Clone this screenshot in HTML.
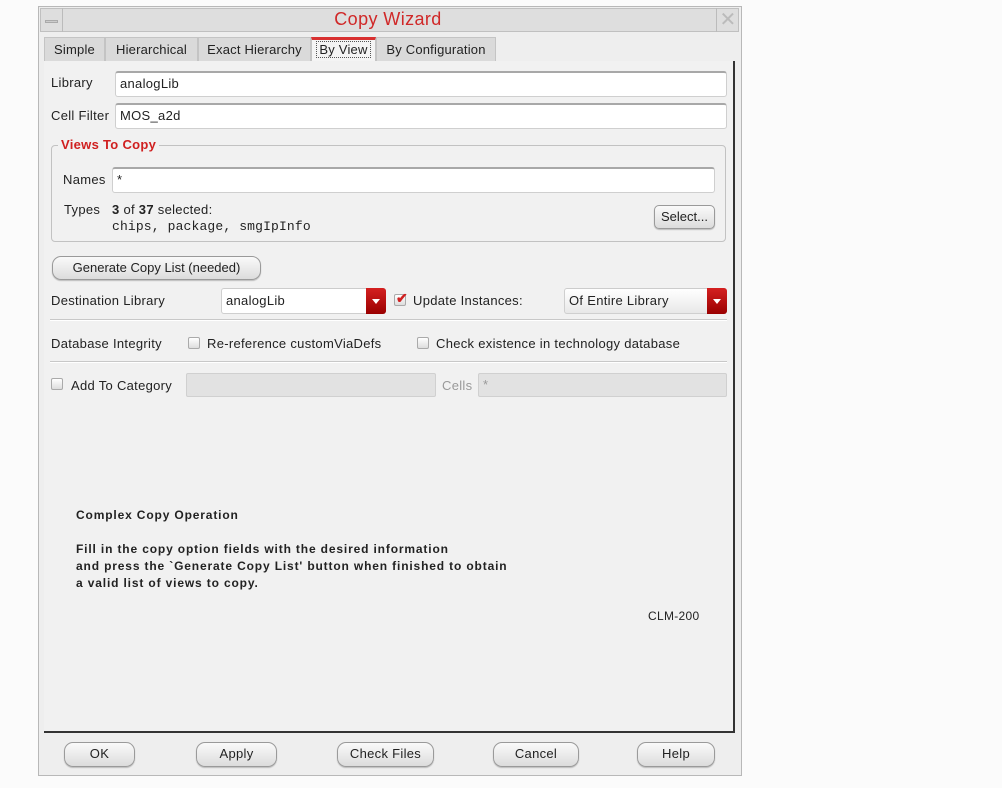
<!DOCTYPE html>
<html><head><meta charset="utf-8"><style>
*{box-sizing:border-box;margin:0;padding:0}
body{width:1002px;height:788px;background:#fbfbfb;font-family:"Liberation Sans",sans-serif;font-size:13px;color:#222;position:relative;overflow:hidden;letter-spacing:0.3px}
.a{position:absolute}
.win{left:38px;top:6px;width:704px;height:770px;background:#eeeeee;border:1px solid #b8b8b8}
.inp{background:#fff;border:1px solid #cfcfcf;border-top:2px solid #a8a8a8;border-radius:3px;padding-left:4px;line-height:22px}
.btn{background:linear-gradient(#fafafa,#dcdcdc);border:1px solid #9a9a9a;border-radius:9px;text-align:center;line-height:22px;box-shadow:0 1px 1px #bbb}
.tab{top:37px;height:24px;background:#dadada;border:1px solid #c4c4c4;border-bottom:none;line-height:24px;text-align:center;letter-spacing:0.2px}
.cb{width:12px;height:12px;border:1px solid #aaa;background:linear-gradient(#fff,#ddd);border-radius:2px}
.sep{height:2px;border-top:1px solid #c8c8c8;border-bottom:1px solid #fff}
.dis{background:#e2e2e2;border:1px solid #d0d0d0;border-radius:2px}
.rb{background:linear-gradient(#d42020,#9a0000);border-radius:0 3px 3px 0}
.rb:after{content:"";position:absolute;left:50%;top:50%;margin:-2px 0 0 -4px;border:4px solid transparent;border-top:5px solid #fff;border-bottom:0}
b{font-weight:bold}
.bt{font-weight:bold;font-size:12px;letter-spacing:0.85px}
</style></head><body>
<div class="a win"></div>
<div class="a" style="left:40px;top:8px;width:699px;height:24px;background:#dedede;border:1px solid #c0c0c0"></div>
<div class="a" style="left:40px;top:8px;width:23px;height:24px;border-right:1px solid #bbb"></div>
<div class="a" style="left:45px;top:20px;width:13px;height:3px;background:#ccc;border:1px solid #aaa"></div>
<div class="a" style="left:716px;top:8px;width:23px;height:24px;border-left:1px solid #bbb;color:#bbb;font-size:20px;text-align:center;line-height:24px">✕</div>
<div class="a" style="left:290px;top:8px;width:196px;text-align:center;color:#d02828;font-size:18px;line-height:22px;letter-spacing:0.4px">Copy Wizard</div>

<div class="a tab" style="left:44px;width:61px">Simple</div>
<div class="a tab" style="left:105px;width:93px">Hierarchical</div>
<div class="a tab" style="left:198px;width:113px">Exact Hierarchy</div>
<div class="a tab" style="left:311px;width:65px;background:#f4f4f4;top:37px;height:25px;border-top:3px solid #d83030;line-height:20px"><span style="border:1px dotted #555;padding:0 2px">By View</span></div>
<div class="a tab" style="left:376px;width:120px">By Configuration</div>

<div class="a" style="left:44px;top:61px;width:691px;height:672px;background:#f1f1f1;border-right:2px solid #333;border-bottom:2px solid #333"></div>

<div class="a" style="left:51px;top:75px">Library</div>
<div class="a inp" style="left:115px;top:71px;width:612px;height:26px">analogLib</div>
<div class="a" style="left:51px;top:108px">Cell Filter</div>
<div class="a inp" style="left:115px;top:103px;width:612px;height:26px">MOS_a2d</div>

<div class="a" style="left:51px;top:145px;width:675px;height:97px;border:1px solid #c2c2c2;border-radius:4px"></div>
<div class="a" style="left:58px;top:137px;background:#f1f1f1;color:#d02020;font-weight:bold;padding:0 3px">Views To Copy</div>
<div class="a" style="left:63px;top:172px">Names</div>
<div class="a inp" style="left:112px;top:167px;width:603px;height:26px">*</div>
<div class="a" style="left:64px;top:202px">Types</div>
<div class="a" style="left:112px;top:202px"><b>3</b> of <b>37</b> selected:</div>
<div class="a" style="left:112px;top:219px;font-family:'Liberation Mono',monospace;font-size:13px;letter-spacing:0.15px">chips, package, smgIpInfo</div>
<div class="a btn" style="left:654px;top:205px;width:61px;height:24px;border-radius:5px;letter-spacing:0">Select...</div>

<div class="a btn" style="left:52px;top:256px;width:209px;height:24px;letter-spacing:0">Generate Copy List (needed)</div>

<div class="a" style="left:51px;top:293px">Destination Library</div>
<div class="a inp" style="left:221px;top:288px;width:165px;height:26px;border-top:1px solid #ccc;line-height:24px">analogLib</div>
<div class="a rb" style="left:366px;top:288px;width:20px;height:26px"></div>
<div class="a cb" style="left:394px;top:294px"></div>
<div class="a" style="left:396px;top:290px;color:#d02020;font-size:14px;font-weight:bold">✔</div>
<div class="a" style="left:413px;top:293px">Update Instances:</div>
<div class="a inp" style="left:564px;top:288px;width:163px;height:26px;border-top:1px solid #ccc;line-height:24px;background:linear-gradient(#fff,#e8e8e8)">Of Entire Library</div>
<div class="a rb" style="left:707px;top:288px;width:20px;height:26px"></div>
<div class="a sep" style="left:50px;top:319px;width:677px"></div>

<div class="a" style="left:51px;top:336px">Database Integrity</div>
<div class="a cb" style="left:188px;top:337px"></div>
<div class="a" style="left:207px;top:336px">Re-reference customViaDefs</div>
<div class="a cb" style="left:417px;top:337px"></div>
<div class="a" style="left:436px;top:336px">Check existence in technology database</div>
<div class="a sep" style="left:50px;top:361px;width:677px"></div>

<div class="a cb" style="left:51px;top:378px"></div>
<div class="a" style="left:71px;top:378px">Add To Category</div>
<div class="a dis" style="left:186px;top:373px;width:250px;height:24px"></div>
<div class="a" style="left:442px;top:378px;color:#999">Cells</div>
<div class="a dis" style="left:478px;top:373px;width:249px;height:24px;color:#999;padding-left:4px;line-height:22px">*</div>

<div class="a bt" style="left:76px;top:508px">Complex Copy Operation</div>
<div class="a bt" style="left:76px;top:541px;line-height:17px">Fill in the copy option fields with the desired information<br>and press the `Generate Copy List' button when finished to obtain<br>a valid list of views to copy.</div>
<div class="a" style="left:648px;top:609px;font-size:12px">CLM-200</div>

<div class="a btn" style="left:64px;top:742px;width:71px;height:25px">OK</div>
<div class="a btn" style="left:196px;top:742px;width:81px;height:25px">Apply</div>
<div class="a btn" style="left:337px;top:742px;width:97px;height:25px">Check Files</div>
<div class="a btn" style="left:493px;top:742px;width:86px;height:25px">Cancel</div>
<div class="a btn" style="left:637px;top:742px;width:78px;height:25px">Help</div>
</body></html>
